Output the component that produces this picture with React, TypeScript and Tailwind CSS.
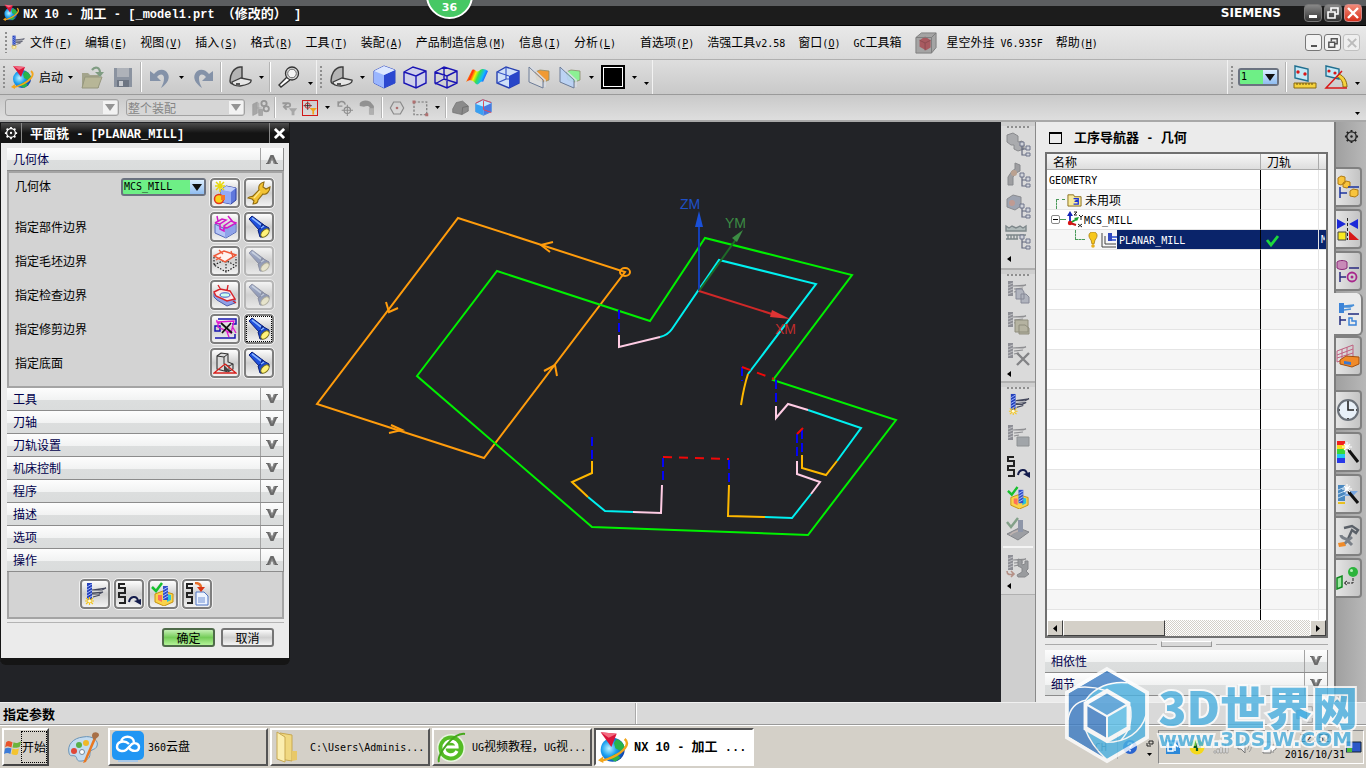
import React from "react";

type Kids = { children?: React.ReactNode };

/* Mixed text: half-width characters are set in a narrow monospace face beside the CJK glyphs. */
function Mix({ text, bold = false }: { text: string; bold?: boolean }) {
  const parts = text.split(/([\x20-\x7e]+)/).filter(Boolean);
  return (
    <span className={bold ? "whitespace-pre font-bold text-[13px]" : "whitespace-pre text-[12px]"}>
      {parts.map((p, i) =>
        /^[\x20-\x7e]+$/.test(p) ? (
          <span
            key={i}
            className={
              bold
                ? "font-['Liberation_Mono',monospace] text-[12px]"
                : "font-['DejaVu_Sans_Mono',monospace] text-[10px]"
            }
          >
            {p}
          </span>
        ) : (
          <span key={i}>{p}</span>
        )
      )}
    </span>
  );
}

function Svg({ s = 24, children, dim = false, vb = "0 0 24 24" }: Kids & { s?: number; dim?: boolean; vb?: string }) {
  return (
    <svg width={s} height={s} viewBox={vb} fill="none" aria-hidden="true" className={dim ? "shrink-0 opacity-50 grayscale" : "shrink-0"}>
      {children}
    </svg>
  );
}

/* ---------- icons ---------- */

const NxLogo = ({ s = 24 }: { s?: number }) => (
  <Svg s={s}>
    <defs>
      <radialGradient id="nxg" cx="0.35" cy="0.45" r="0.7">
        <stop offset="0" stopColor="#bff4ff" />
        <stop offset="0.45" stopColor="#1aa0f0" />
        <stop offset="1" stopColor="#0b2fa0" />
      </radialGradient>
    </defs>
    <circle cx="11" cy="14" r="9" fill="url(#nxg)" />
    <path d="M14 6c3 1 5 3 6 6l-3 3-4-2-1-4zM8 20l5-3 4 3-4 3z" fill="#29b34a" />
    <path d="M20 6c5 4-2 10-8 13-4 2-8 3-10 3" stroke="#f2a61c" strokeWidth="1.8" />
    <path d="M0 22l4-3v5z" fill="#f2a61c" />
    <path d="M2 1l12 1-4 10z" fill="#d8143a" />
    <path d="M2 1l12 1-6 3z" fill="#f46a80" />
  </Svg>
);

const Mill = ({ s = 24 }: { s?: number }) => (
  <Svg s={s}>
    <path d="M4 1h5v17H4z" fill="#2440b8" />
    <path d="M4 5l5-3M4 8l5-3M4 11l5-3M4 14l5-3M4 17l5-3" stroke="#9db4ff" />
    <path d="M9 8l14-2-4 2H9M9 11l11-1-4 2H9M10 15l7-2" stroke="#44485c" strokeWidth="1.1" />
    <path d="M6.5 15v8M2 19h9M3 16l7 6M10 16l-7 6" stroke="#f5c518" strokeWidth="1.1" />
    <circle cx="6.500" cy="19" r="1.500" fill="#fffbe0" />
  </Svg>
);

const Serp = ({ s = 24 }: { s?: number }) => (
  <Svg s={s}>
    <path d="M8 2H2v4h6v5H2v4h6v6H2" stroke="#222" strokeWidth="2" />
    <path d="M12 20c1-6 8-7 9-1" stroke="#141c4c" strokeWidth="2" />
    <path d="M17 19l7-2v6z" fill="#141c4c" />
  </Svg>
);

const Verify = ({ s = 24 }: { s?: number }) => (
  <Svg s={s}>
    <path d="M4 12l8-3 10 3v8l-9 4-9-4z" fill="#f9d34a" stroke="#c79412" />
    <path d="M7 13h4v7l-4-2z" fill="#ff6f5a" />
    <path d="M16 12l4 1v5l-4 2z" fill="#2cc7d8" />
    <path d="M12 4h5v14h-5z" fill="#3150c8" />
    <path d="M12 8l5-3M12 11l5-3M12 14l5-3M12 17l5-3" stroke="#a9bcff" />
    <path d="M1 5l4 4 6-8" stroke="#16c02e" strokeWidth="2.5" />
  </Svg>
);

const Post = () => (
  <Svg>
    <path d="M8 2H2v4h5v5H2v4h5v6H2" stroke="#222" strokeWidth="2" />
    <path d="M11 10h8l4 4v9H11z" fill="#eef4ff" stroke="#4f74c4" />
    <path d="M13 16h7M13 18h7M13 20h7" stroke="#6f8fd4" />
    <path d="M10 1c4 0 6 2 6 5" stroke="#e8702a" strokeWidth="2.5" />
    <path d="M12 5h8l-4 5z" fill="#d93616" />
  </Svg>
);

const Torch = ({ dim = false }: { dim?: boolean }) => (
  <svg width={24} height={24} viewBox="0 0 24 24" fill="none" aria-hidden="true" className={dim ? "opacity-40 saturate-50" : ""}>
    <path d="M2 4l3-3 12 9-5 5z" fill="#1f50dc" stroke="#0a1f78" />
    <path d="M5 3l9 7" stroke="#8cb8ff" strokeWidth="1.600" />
    <path d="M11 15c2-1 4-3 4-6l7 4v3l-6 6h-3z" fill="#1b48c8" stroke="#0a1f78" />
    <path d="M14 13l3-2" stroke="#8cb8ff" strokeWidth="1.500" />
    <ellipse cx="18" cy="18" rx="5" ry="3" transform="rotate(-45 18 18)" fill="#fff27a" stroke="#7a7018" />
  </svg>
);

const Cube = ({ s = 24 }: { s?: number }) => (
  <Svg s={s}>
    <path d="M2 6l10-5 11 4v13l-11 5-10-5z" fill="#9fb8ff" stroke="#2c46c0" />
    <path d="M12 10l11-5v13l-11 5z" fill="#2b47d0" />
    <path d="M2 6l10 4v13L2 18z" fill="#9ab6ff" />
    <path d="M2 6l10-5 11 4-11 5z" fill="#dce7ff" />
  </Svg>
);
const CubeEdges = () => (
  <Svg>
    <path d="M1 7l9-5 13 4v12l-10 5-12-5zM1 7l12 4v12M13 11l10-5" fill="#cfd0ea" stroke="#1a14b4" strokeWidth="1.4" />
  </Svg>
);
const CubeWire = () => (
  <Svg>
    <path d="M1 7l9-5 13 4v12l-10 5-12-5zM1 7l12 4v12M13 11l10-5M10 2v12M1 19l9-5 13 4" stroke="#1a14b4" strokeWidth="1.4" />
  </Svg>
);
const CubeHalf = () => (
  <Svg>
    <path d="M1 7l9-5 13 4v12l-10 5-12-5z" fill="#cfe0f8" stroke="#2840b0" strokeWidth="1.4" />
    <path d="M13 11l10-5v12l-10 5z" fill="#2846c8" />
    <path d="M1 7l12 4M10 2v12L1 18M10 14h3" stroke="#3a58c8" strokeWidth="1.2" />
  </Svg>
);
const Rainbow = () => (
  <Svg>
    <defs>
      <linearGradient id="rb" x1="0" x2="1" y1="0.1" y2="0.4">
        <stop offset="0" stopColor="#ff8a00" />
        <stop offset="0.12" stopColor="#ffe000" />
        <stop offset="0.3" stopColor="#ff2a10" />
        <stop offset="0.45" stopColor="#ffee00" />
        <stop offset="0.6" stopColor="#39e04a" />
        <stop offset="0.8" stopColor="#10b8ff" />
        <stop offset="1" stopColor="#2a30ff" />
      </linearGradient>
    </defs>
    <path d="M1 17L7 5c3-2 4 3 7 1 3-3 6-2 9 0l-5 11c-3-2-4 4-7 2-3-4-6-5-10-2z" fill="url(#rb)" />
  </Svg>
);
const Section = ({ a, b }: { a: string; b: string }) => (
  <Svg>
    <path d="M8 7l5-2 9 1v9l-5 2-7-2z" fill={a} stroke="#8a8a6a" strokeWidth="0.800" />
    <path d="M2 2l14 13v8L2 17z" fill={b} fillOpacity="0.9" stroke="#6c7c98" />
    <path d="M4 2l14 13v7" stroke="#d8dce4" strokeWidth="1.600" />
  </Svg>
);
const Sweep = () => (
  <Svg>
    <path d="M2 16c0-6 3-13 10-14h2v13l-8 4c-2 0-4-1-4-3z" fill="#b4b4b4" stroke="#3c3c3c" strokeWidth="1.4" />
    <path d="M4 17l9-4 10 2c1 3-4 5-11 6-5 0-8-1-8-4z" fill="#e6e6e6" stroke="#3c3c3c" strokeWidth="1.3" />
    <path d="M8 18h4v2H8z" fill="#555" />
  </Svg>
);
const Magnify = () => (
  <Svg>
    <path d="M10 12l-8 8 2 2 9-7" fill="#fff" stroke="#333" strokeWidth="1.4" />
    <circle cx="15" cy="8.5" r="6.500" fill="#ddd" stroke="#333" strokeWidth="1.3" />
    <circle cx="15" cy="8.5" r="4.300" fill="#f4f4f4" stroke="#666" />
  </Svg>
);
const Folder = () => (
  <Svg>
    <path d="M2 8h6l2 2h9v13H2z" fill="#a3a48c" />
    <path d="M5 12h17l-4 11H2z" fill="#b7b697" stroke="#96977e" />
    <path d="M12 5c3-4 8-3 8 3" stroke="#7f9c82" strokeWidth="2.2" />
    <path d="M15 7h9l-4 5z" fill="#7f9c82" />
  </Svg>
);
const Save = () => (
  <Svg>
    <path d="M3 3h18v19H3z" fill="#8b93a0" />
    <path d="M6 3h12v9H6z" fill="#aeb2b9" />
    <path d="M6 15h12v7H6z" fill="#6d7582" />
    <path d="M8 16h4v5H8z" fill="#c8cbd0" />
  </Svg>
);
const Undo = ({ flip = false }: { flip?: boolean }) => (
  <Svg>
    <g transform={flip ? "translate(24 0) scale(-1 1)" : undefined}>
      <path d="M2 6v10h11l-4-4c3-4 7-3 7 1 0 4-1 6-3 10 7-5 9-10 7-14-3-6-10-5-14 0z" fill="#8492a8" />
    </g>
  </Svg>
);
const Gear = ({ light = false, s = 16 }: { light?: boolean; s?: number }) => (
  <Svg s={s} vb="0 0 16 16">
    <path d="M8 1v14M1 8h14M3 3l10 10M13 3L3 13" stroke={light ? "#fff" : "#222"} strokeWidth="2" />
    <circle cx="8" cy="8" r="5" fill={light ? "#222" : "#aaa"} stroke={light ? "#fff" : "#222"} strokeWidth="1.4" />
    <circle cx="8" cy="8" r="1.3" fill={light ? "#fff" : "#222"} />
  </Svg>
);
const Wrench = () => (
  <Svg>
    <path d="M1 17c2-2 4-1 5-2l6-6c-1-4 1-7 5-8l-1 5 3 2 4-2c0 5-4 8-7 7l-5 6c0 3-2 4-5 4l1-3-2-2z" fill="#f2c233" stroke="#8f6b10" strokeWidth="1.1" />
    <path d="M7 17l6-7" stroke="#fde88a" strokeWidth="1.400" />
  </Svg>
);
const NewGeom = () => (
  <Svg>
    <path d="M8 9l5-4 10 2v12l-5 4-10-2z" fill="#5f78dc" stroke="#2d3fa0" />
    <path d="M8 9l10 2v12L8 21z" fill="#93aaf5" />
    <path d="M8 9l5-4 10 2-5 4z" fill="#c2d0fb" />
    <circle cx="6" cy="18" r="4.500" fill="#f7d21c" stroke="#e2361c" strokeWidth="1.500" />
    <path d="M8 14h4v5H8z" fill="#f2762a" />
    <path d="M7 0v11M2 5h10M3 1l8 8M11 1L3 9" stroke="#e8d80c" strokeWidth="1.500" />
  </Svg>
);
const PartBnd = () => (
  <Svg>
    <path d="M2 9l10 5 11-5v8l-10 6-11-5z" fill="#b4c4f6" stroke="#5468b8" />
    <path d="M12 14v9l10-6V9z" fill="#8ea2ea" />
    <path d="M2 8l7-4 4 1-6 4v5l4 2v-5l7-5 5 2-9 5-3-1M2 8l5 1M4 1l1 5M15 1l5 6" stroke="#d217c8" strokeWidth="1.500" />
  </Svg>
);
const BlankBnd = () => (
  <Svg>
    <path d="M1 8v8l12 7 10-6V8M13 12v11M1 16l11-5 11 6" stroke="#222" strokeWidth="1.2" strokeDasharray="1.5 1.5" />
    <path d="M1 7l10-5 12 4-11 7z" fill="#fff3ef" stroke="#ee5a3a" strokeWidth="1.5" />
    <path d="M6 1l4 4M18 2l2 6M3 11l5-3" stroke="#ee5a3a" strokeWidth="1.3" />
  </Svg>
);
const CheckBnd = () => (
  <Svg>
    <path d="M1 10l5-3 10 2 6 7v4l-8 3-10-6-3-3z" fill="#8fa0e8" stroke="#5060a8" />
    <path d="M1 9l6-3 10 2 5 8-8 2-11-5zM5 2l3 5M15 2l-1 6M20 18l3 2" fill="#fbe8e8" stroke="#d8232a" strokeWidth="1.400" />
    <ellipse cx="12" cy="12" rx="5" ry="2.200" fill="#cfe" stroke="#3b56c8" />
  </Svg>
);
const TrimBnd = () => (
  <Svg>
    <path d="M5 2h18v5h-4M2 9h5v5H2zM2 21h20v-4" stroke="#1714b0" strokeWidth="1.500" />
    <path d="M5 5l16-1-3 12-13-6zM4 3a2 2 0 104 2M14 15l2 5M19 9l4 7" stroke="#e014d0" strokeWidth="1.300" fill="none" />
    <path d="M8 6l11 10M18 6L9 16" stroke="#111" strokeWidth="1.700" />
  </Svg>
);
const Floor = () => (
  <Svg>
    <path d="M4 5l4-3 7 1v8l5 2v5l-5 3-11-3z" fill="#dadada" stroke="#333" strokeWidth="1.1" />
    <path d="M4 5l7 1v7l5 2v5M11 6l4-3M16 15l4-2" stroke="#333" />
    <path d="M1 22h22L12 13z" stroke="#d8201c" strokeWidth="1.3" />
    <path d="M11 14l6 6h-6z" fill="#444" />
  </Svg>
);
const TreeMini = ({ kind }: { kind: number }) => (
  <Svg s={26} vb="0 0 26 26">
    <g opacity="0.75">
      {kind === 0 && <path d="M2 4l6-2 5 3v6l4-1 2 3v5l-6 2-4-2v-4H6l-4-3z" fill="#9b9ca0" stroke="#6f7074" />}
      {kind === 1 && (
        <>
          <path d="M10 1l5 2v6l-4 2-3 4v8H3v-8l4-6 3-2z" fill="#8a8b8f" stroke="#6d6e72" />
          <circle cx="9" cy="11" r="3" fill="#b08f78" />
        </>
      )}
      {kind === 2 && (
        <>
          <path d="M2 6l6-4 8 2v9l-6 4-8-3z" fill="#8b93a4" stroke="#6f7176" />
          <circle cx="7" cy="10" r="3" fill="#b6867c" />
        </>
      )}
      {kind === 3 && (
        <path d="M1 2v5h20V2l-3 2-3-2-4 2-4-2-3 2zM1 11h20M1 15h12M3 11v4M6 11v4M9 11v4M12 11v4" fill="#a3b0b0" stroke="#5f6c70" strokeWidth="1.4" />
      )}
      <path d="M17 14v10h4M17 18h4" stroke="#3d4560" strokeWidth="1.2" />
      <path d="M15 11h4v4h-4zM21 15h4v4h-4zM21 22h4v3h-4z" fill="#cfd2dc" stroke="#4a5270" />
    </g>
  </Svg>
);
const DimOver = ({ kind }: { kind: number }) => (
  <Svg s={24}>
    <g opacity="0.75">
      <path d="M2 1h5v15H2z" fill="#74757e" />
      <path d="M2 5l5-2M2 8l5-2M2 11l5-2M2 14l5-2" stroke="#b4b5bb" />
      <path d="M7 6l13-1-3 1H7M8 9l9-1M8 12l5-1" stroke="#76777b" strokeWidth="1.2" />
      {kind === 0 && <path d="M10 9h6l2 3v7h-8zM15 14h5l3 3v6h-8z" fill="#a3a6b4" stroke="#6a6e80" />}
      {kind === 1 && <path d="M9 9h13v12H9zM13 14h6l4 3v6H13z" fill="#a9a68f" stroke="#77745e" />}
      {kind === 2 && <path d="M11 11l12 12M23 11L11 23" stroke="#66676a" strokeWidth="2.4" />}
      {kind === 3 && <path d="M11 13h12v9H11z" fill="#8f9499" stroke="#74787c" />}
      {kind === 4 && (
        <>
          <path d="M12 5l4 1v5l3-1v-3h3v8l-2 2 3 3-4 3h-7l-1-2 5-3v-4l-4-2z" fill="#84868a" stroke="#6a6c70" />
          <path d="M1 17c0 4 3 4 6 3M5 17l3 3-3 3" stroke="#a8786a" strokeWidth="1.6" />
        </>
      )}
    </g>
  </Svg>
);
const SimDim = () => (
  <Svg>
    <g opacity="0.7">
      <path d="M1 17l12-6 10 4-11 8z" fill="#82858c" stroke="#5f6268" />
      <path d="M4 18c5-5 8-3 12-6" stroke="#b4a4a0" strokeWidth="1.400" />
      <path d="M12 3h5v12h-5z" fill="#6f7a94" />
      <path d="M1 5l4 5 7-9" stroke="#5f8a68" strokeWidth="2.5" />
    </g>
  </Svg>
);

/* ---------- small parts ---------- */

const Arrow = ({ low = false }: { low?: boolean }) => (
  <svg width="5" height="3" viewBox="0 0 5 3" aria-hidden="true" className={low ? "mt-3" : ""}>
    <path d="M0 0h5L2.500 3z" fill="#000" />
  </svg>
);
const ArrowBtn = ({ label, low = false }: { label: string; low?: boolean }) => (
  <button aria-label={label} className="flex h-7 w-3 items-center justify-center">
    <Arrow low={low} />
  </button>
);
const Tool = ({ label, children }: Kids & { label: string }) => (
  <button aria-label={label} className="flex h-7 w-[31px] items-center justify-center">
    {children}
  </button>
);
const Sep = () => (
  <div className="flex w-1.5 justify-center self-stretch py-0.5">
    <div className="w-0.5 border-l border-[#b4b4b4] bg-white" />
  </div>
);
const Grip = () => (
  <div className="flex w-2 justify-center self-stretch py-1.5">
    <div className="w-0.5 bg-[repeating-linear-gradient(to_bottom,#8e8e8e_0_2px,transparent_2px_4px)]" />
  </div>
);
const HGrip = () => <div className="mx-auto mt-1 h-0.5 w-[22px] bg-[repeating-linear-gradient(to_right,#8e8e8e_0_2px,transparent_2px_4px)]" />;

const Chevron = ({ up = false }: { up?: boolean }) => (
  <svg width="12" height="10" viewBox="0 0 12 10" aria-hidden="true" className={up ? "rotate-180" : ""}>
    <path d="M0 0h4l2 5 2-5h4v1h-1L7.500 9h-3L1 1H0z" fill="#6a6a6a" />
    <path d="M3 0h1l2 5 2-5h1v1L6 7 3 1z" fill="#8a8a8a" />
  </svg>
);

function SectionBar({ title, open = false }: { title: string; open?: boolean }) {
  return (
    <button
      aria-expanded={open}
      className="flex h-[23px] w-full items-stretch border-r border-b border-[#8c8c8c] bg-[linear-gradient(#fdfdfd,#f1f2f2_55%,#dcdede_56%,#dadcdc)] text-left text-[12px] text-[#00004c]"
    >
      <span className="flex flex-1 items-center pl-1.5">{title}</span>
      <span className="flex w-[23px] items-center justify-center border-l border-[#a4a4a4]">
        <Chevron up={open} />
      </span>
    </button>
  );
}

const IconBtn = ({ label, children, off = false, focus = false }: Kids & { label: string; off?: boolean; focus?: boolean }) => (
  <button
    aria-label={label}
    disabled={off}
    className={
      off
        ? "flex size-[30px] items-center justify-center rounded-[4px] border-2 border-[#b6b6b6] bg-[linear-gradient(#f4f4f4,#d0d0d0_50%,#e8e8e8)] outline-1 outline-[#e8e8e8]"
        : "flex size-[30px] items-center justify-center rounded-[4px] border-2 border-[#7e7e7e] bg-[linear-gradient(#fdfdfd,#cfcfcf_50%,#f2f2f2)] outline-1 outline-[#f0f0f0]"
    }
  >
    <span className={focus ? "flex size-[26px] items-center justify-center border border-dotted border-black" : "flex"}>{children}</span>
  </button>
);

function Combo({ label, value, width, on = true }: { label: string; value: string; width: string; on?: boolean }) {
  return (
    <label className={"relative block shrink-0 " + width}>
      <span className="sr-only">{label}</span>
      <select
        disabled={!on}
        className={
          on
            ? "block h-[18px] w-full appearance-none rounded-[3px] border-2 border-[#6b7280] bg-[#6eef86] pl-px font-['DejaVu_Sans_Mono',monospace] text-[10px] leading-[14px] text-black"
            : "block h-[17px] w-full appearance-none rounded-[3px] border border-[#a2a2a2] bg-[#d6d6d6] pl-px text-[12px] leading-[15px] text-[#858585] opacity-100"
        }
      >
        <option>{value}</option>
      </select>
      <span
        className={
          on
            ? "pointer-events-none absolute top-0.5 right-0.5 flex h-[14px] w-3.5 items-center justify-center bg-[linear-gradient(#dceeff,#8fbcf0)]"
            : "pointer-events-none absolute top-0.5 right-0.5 flex h-[13px] w-3.5 items-center justify-center bg-[#f2f2f2]"
        }
      >
        <svg width="10" height="7" viewBox="0 0 10 7" aria-hidden="true">
          <path d="M0 0h10L5 7z" fill={on ? "#111" : "#949494"} />
        </svg>
      </span>
    </label>
  );
}

/* ---------- header rows ---------- */

const MENUS: [string, string][] = [
  ["文件", "F"], ["编辑", "E"], ["视图", "V"], ["插入", "S"], ["格式", "R"], ["工具", "T"],
  ["装配", "A"], ["产品制造信息", "M"], ["信息", "I"], ["分析", "L"],
];

const MenuItem = ({ t, k }: { t: string; k?: string }) => (
  <button className="flex items-baseline whitespace-pre text-[12px] text-black">
    <Mix text={t} />
    {k && (
      <span className="font-['DejaVu_Sans_Mono',monospace] text-[10px]">
        (<u>{k}</u>)
      </span>
    )}
  </button>
);

function TitleBar() {
  return (
    <header className="relative flex h-[26px] items-center border-b border-black bg-[linear-gradient(#5c5e60_0_6px,#1c1c1c_6px)] pl-[3px] text-white">
      <NxLogo s={17} />
      <h1 className="ml-[3px] flex-1">
        <Mix bold text="NX 10 - 加工 - [_model1.prt （修改的） ]" />
      </h1>
      <div className="absolute -top-[28px] left-[426px] z-10 flex size-[47px] items-end justify-center rounded-full border-2 border-white bg-[#46c864] pb-[3px] font-['DejaVu_Sans',sans-serif] text-[11px] leading-[13px] font-bold shadow">
        36
      </div>
      <span className="mr-[23px] font-['DejaVu_Sans',sans-serif] text-[12px] font-bold">SIEMENS</span>
      <div className="mr-1 flex gap-0.5">
        <button aria-label="最小化" className="flex size-[18px] items-end justify-center rounded-sm border border-[#777] bg-[linear-gradient(#888,#333)] pb-[3px]">
          <span className="h-[3px] w-2 bg-white" />
        </button>
        <button aria-label="还原" className="flex size-[18px] items-center justify-center rounded-sm border border-[#777] bg-[linear-gradient(#888,#333)]">
          <Svg s={12} vb="0 0 12 12"><path d="M4 4V1h7v6H8M1 5h7v6H1z" stroke="#fff" strokeWidth="1.600" /></Svg>
        </button>
        <button aria-label="关闭" className="flex size-[18px] items-center justify-center rounded-sm border border-[#c88] bg-[linear-gradient(#f08a78,#d8301c)]">
          <Svg s={12} vb="0 0 12 12"><path d="M1 1l10 10M11 1L1 11" stroke="#fff" strokeWidth="2.400" /></Svg>
        </button>
      </div>
    </header>
  );
}

function MenuBar() {
  return (
    <nav aria-label="主菜单" className="flex h-[34px] items-center border-b border-[#b0b0b0] bg-[linear-gradient(#e9e9e9,#d9d9d9)] pl-0.5">
      <div className="flex w-7 items-center self-stretch">
        <Grip />
        <Mill s={15} />
      </div>
      <div className="flex items-center gap-[13px]">
        {MENUS.map(([t, k]) => <MenuItem key={t} t={t} k={k} />)}
        <span className="-ml-0.5" />
        <MenuItem t="首选项" k="P" />
        <MenuItem t="浩强工具v2.58" />
        <MenuItem t="窗口" k="O" />
        <MenuItem t="GC工具箱" />
        <span className="-mr-[3px] flex">
          <Svg s={22}>
            <path d="M1 6l6-5h16v16l-5 6H1z" fill="#a4a4a4" stroke="#7c7c7c" />
            <path d="M5 9l6-4 6 4v8l-5 3-7-4z" fill="#a85a60" />
            <path d="M5 9l6 3 6-3M11 12v8" stroke="#8a4a50" />
            <path d="M1 6h17v17M18 6l5-5" stroke="#7c7c7c" />
          </Svg>
        </span>
        <MenuItem t="星空外挂 V6.935F" />
        <MenuItem t="帮助" k="H" />
      </div>
      <div className="mr-1.5 ml-auto flex gap-0.5">
        <button aria-label="最小化窗口" className="flex size-[17px] items-end justify-center rounded-[3px] border border-[#777] bg-[#f2f2f2] pb-[3px]">
          <span className="h-0.5 w-1.5 bg-[#555]" />
        </button>
        <button aria-label="还原窗口" className="flex size-[17px] items-center justify-center rounded-[3px] border border-[#777] bg-[#f2f2f2]">
          <Svg s={10} vb="0 0 12 12"><path d="M4 4V1h7v6H8M1 5h7v6H1z" stroke="#555" strokeWidth="1.800" /></Svg>
        </button>
        <button aria-label="关闭窗口" className="flex size-[17px] items-center justify-center rounded-[3px] border border-[#c0c0c0] bg-[#eee]">
          <Svg s={10} vb="0 0 12 12"><path d="M1 1l10 10M11 1L1 11" stroke="#bbb" strokeWidth="2.400" /></Svg>
        </button>
      </div>
    </nav>
  );
}

const MeasureDist = () => (
  <Svg>
    <path d="M2 1l13 3v12L2 13z" fill="#c4e8f6" stroke="#1f6f90" strokeWidth="1.4" />
    <circle cx="5" cy="7" r="1.700" fill="#d81818" /><circle cx="12" cy="9" r="1.700" fill="#d81818" />
    <path d="M1 18h22v5H1z" fill="#f5d23c" stroke="#8a6a10" />
    <path d="M4 18v2M7 18v2M10 18v2M13 18v2M16 18v2M19 18v2" stroke="#6a5010" />
  </Svg>
);
const MeasureAng = () => (
  <Svg>
    <path d="M2 1l13 3v10L2 11z" fill="#c4e8f6" stroke="#1f6f90" strokeWidth="1.4" />
    <circle cx="5" cy="6" r="1.600" fill="#d81818" /><circle cx="11" cy="8" r="1.600" fill="#d81818" />
    <path d="M15 9c5 2 8 7 8 13h-4c0-5-2-9-6-10z" fill="#f5d23c" stroke="#8a6a10" />
    <path d="M18 6L2 23h21" stroke="#d81818" strokeWidth="1.500" />
  </Svg>
);

function MainToolbar() {
  return (
    <div className="flex h-[35px] border-b border-[#9a9a9a] bg-[linear-gradient(#dedede,#c9c9c9)]">
      <div className="flex items-center border-r border-[#f2f2f2]">
        <Grip />
        <button className="flex items-center whitespace-pre text-[12px] text-black">
          <span className="flex w-[30px] justify-center"><NxLogo s={24} /></span>
          <span className="w-[26px]">启动</span>
        </button>
        <ArrowBtn label="启动选项" />
        <Tool label="打开"><Folder /></Tool>
        <Tool label="保存"><Save /></Tool>
        <Sep />
        <Tool label="撤消"><Undo /></Tool>
        <ArrowBtn label="撤消列表" />
        <Tool label="重做"><Undo flip /></Tool>
        <Sep />
        <Tool label="编辑显示"><Sweep /></Tool>
        <ArrowBtn label="显示选项" />
        <Sep />
        <Tool label="命令查找"><Magnify /></Tool>
        <ArrowBtn label="更多" low />
      </div>
      <div className="flex items-center border-r border-[#f2f2f2]">
        <Grip />
        <Tool label="视图方位"><Sweep /></Tool>
        <ArrowBtn label="方位选项" />
        <Tool label="着色"><Cube /></Tool>
        <Tool label="带边着色"><CubeEdges /></Tool>
        <Tool label="静态线框"><CubeWire /></Tool>
        <Tool label="面分析"><Rainbow /></Tool>
        <Tool label="局部着色"><CubeHalf /></Tool>
        <Tool label="编辑截面"><Section a="#f09a34" b="#dedede" /></Tool>
        <Tool label="剪切截面"><Section a="#8cf094" b="#b9d3f6" /></Tool>
        <ArrowBtn label="截面选项" />
        <Tool label="背景"><span className="size-6 border-2 border-black bg-black shadow-[inset_0_0_0_1px_#fff]" /></Tool>
        <ArrowBtn label="背景选项" />
        <ArrowBtn label="更多视图" low />
      </div>
      <div className="ml-auto flex items-center border-l border-[#f2f2f2] pr-[3px]">
        <Grip />
        <span className="w-0.5" />
        <Combo label="工作层" value="1" width="w-[41px]" />
        <span className="w-1" />
        <Sep />
        <Tool label="测量距离"><MeasureDist /></Tool>
        <Tool label="测量角度"><MeasureAng /></Tool>
        <ArrowBtn label="更多测量" low />
      </div>
    </div>
  );
}

const SmallTool = ({ label, children }: Kids & { label: string }) => (
  <button aria-label={label} className="flex h-5 w-[23px] items-center justify-center">
    {children}
  </button>
);

function SelectionBar() {
  return (
    <div className="flex h-[27px] items-center border-b-2 border-[#a8a8a8] bg-[linear-gradient(#c9c9c9,#dedede)] pl-[5px]">
      <Combo label="类型过滤器" value="" width="w-[114px]" on={false} />
      <span className="w-[7px]" />
      <Combo label="选择范围" value="整个装配" width="w-[119px]" on={false} />
      <span className="w-1" />
      <SmallTool label="相邻"><Svg s={18} dim><path d="M1 7l6-3v15l-6 3zM9 5v14M6 12h7M9 14h5v8H9z" fill="#777" stroke="#667" /><circle cx="16" cy="6" r="3.500" stroke="#665c30" strokeWidth="2.500" /><circle cx="19" cy="13" r="3.500" stroke="#665c30" strokeWidth="2.500" /></Svg></SmallTool>
      <Sep />
      <SmallTool label="重置过滤器"><Svg s={17} dim><path d="M2 6h8c4 0 4 5 0 5H6M8 7l-4 4 4 4" stroke="#566" strokeWidth="2.500" /><path d="M11 13h12l-4 5v5h-4v-5z" fill="#887a4a" /></Svg></SmallTool>
      <button aria-label="允许高亮显示" className="mr-[3px] ml-px flex size-4 items-center justify-center border border-[#d01818]">
        <Svg s={14}><path d="M8 1v14M1 8h14" stroke="#222" strokeWidth="1.500" /><circle cx="8" cy="8" r="4.500" stroke="#c22" strokeWidth="1.500" /><path d="M11 12h13l-5 5v6h-3v-6z" fill="#f2a41c" /></Svg>
      </button>
      <ArrowBtn label="高亮选项" />
      <SmallTool label="移动"><Svg s={17} dim><path d="M3 9C4 2 12 2 13 8M3 3v7h6" stroke="#555" strokeWidth="2" /><circle cx="16" cy="16" r="4.500" stroke="#834" strokeWidth="1.600" /><path d="M16 8v16M8 16h16" stroke="#834" strokeWidth="1.500" /></Svg></SmallTool>
      <SmallTool label="拖动"><Svg s={17} dim><path d="M1 6c3-4 9-5 15-2l5 6v12h-6V12c-2-3-5-2-8-1L1 10z" fill="#554" /><path d="M14 13h7v9h-7z" fill="#998a60" /></Svg></SmallTool>
      <Sep />
      <SmallTool label="点"><Svg s={16}><path d="M7 3h10l5 9-5 9H7l-5-9z" stroke="#8a8a8a" strokeWidth="1.800" /><circle cx="12" cy="12" r="2" fill="#b07070" /></Svg></SmallTool>
      <SmallTool label="矩形选择"><Svg s={18}><path d="M4 4h17v17H4z" stroke="#777" strokeWidth="1.600" strokeDasharray="3 2" /><path d="M2 2h4v4H2zM19 19h4v4h-4z" fill="#b07070" /></Svg></SmallTool>
      <ArrowBtn label="选择方式" />
      <Sep />
      <SmallTool label="实体"><Svg s={17}><path d="M1 14l5-9 9-2 8 7v7l-9 5-13-3z" fill="#8a8a8a" stroke="#707070" /><path d="M14 22l1-10 8-2" stroke="#666" /></Svg></SmallTool>
      <SmallTool label="着色边"><Svg s={17}><path d="M1 6l10-5 12 4v13l-11 5-11-5z" fill="#bfe9ff" stroke="#2b7fd8" /><path d="M1 7l11 4v12L1 18z" fill="#38a0f2" /><path d="M12 11l11-5v12l-11 5z" fill="#4a78e0" /><path d="M1 6l10-5 12 4M12 3v12l11 4" stroke="#e04858" strokeWidth="1.400" /></Svg></SmallTool>
      <div className="ml-auto flex pr-[3px]"><ArrowBtn label="选择条选项" low /></div>
    </div>
  );
}

/* ---------- graphics area ---------- */

function Toolpath() {
  return (
    <svg viewBox="0 122 1001 580" preserveAspectRatio="xMinYMin meet" className="absolute inset-0 size-full" fill="none" aria-label="刀轨">
      <g strokeWidth="2">
        <path d="M458 218L625 272 484 458 317 404z" stroke="#ff9c0c" />
        <path d="M553 242l-12 3 9 7M386 302l3 10 9-4M391 425l11 5-13 3M544 371l11-6 2 11" stroke="#ff9c0c" />
        <ellipse cx="625" cy="272" rx="5" ry="4" stroke="#ff9c0c" />
        <path d="M497 271L650 321 705 238 852 275 773 380 896 420 808 535 592 527 417 376z" stroke="#00f000" />
        <g stroke="#00f0f0">
          <path d="M660 337q8-2 12-8L719 260 816 284 748 374M808 410l53 18-24 33M811 494l-19 24-27-1M633 512l-28-1-17-14" />
        </g>
        <g stroke="#ffcce4">
          <path d="M619 335v12l41-10M776 406v12l12-14 20 6M797 461v13l23 8-9 12M662 485l-1 28-28-1" />
        </g>
        <g stroke="#ffb800">
          <path d="M748 374q-4 12-7 31M837 461l-11 14-24-7v-13M765 517l-37-1 1-31M588 497l-16-15 20-9v-12" />
        </g>
        <g stroke="#0404f4" strokeDasharray="9 4">
          <path d="M619 310v25M742 367v14M776 380v24M802 430v26M797 434v26M729 460v24M663 458v26M592 437v24" />
        </g>
        <path d="M742 367l32 12M663 457l66 2M797 434l6-6" stroke="#f00808" strokeDasharray="9 7" />
        <path d="M699 291v-70" stroke="#1440b8" />
        <path d="M699 211l-4 16h8z" fill="#1a50d8" />
        <path d="M699 291l38-53" stroke="#1e6a28" />
        <path d="M743 230l-11 8 5 4z" fill="#3c8c44" />
        <path d="M699 291l76 24" stroke="#d02828" />
        <path d="M790 319l-18-9-2 7z" fill="#e03434" />
      </g>
      <g fontFamily="'Liberation Sans', sans-serif" fontSize="14">
        <text x="680" y="209" fill="#1e50c8">ZM</text>
        <text x="725" y="228" fill="#3c8c44">YM</text>
        <text x="775" y="334" fill="#c02c2c">XM</text>
      </g>
    </svg>
  );
}

const GEOM_ROWS: { name: string; icon: React.ReactNode; off?: boolean; focus?: boolean }[] = [
  { name: "指定部件边界", icon: <PartBnd /> },
  { name: "指定毛坯边界", icon: <BlankBnd />, off: true },
  { name: "指定检查边界", icon: <CheckBnd />, off: true },
  { name: "指定修剪边界", icon: <TrimBnd />, focus: true },
  { name: "指定底面", icon: <Floor /> },
];

function MillDialog() {
  return (
    <section role="dialog" aria-label="平面铣" className="relative mt-px w-[290px] rounded-b-md border-r border-b-[7px] border-l border-[#151515] bg-[#ebebeb]">
      <div className="flex h-5 items-center bg-[linear-gradient(#4c4c4c,#141414_50%)] text-white">
        <button aria-label="对话框选项" className="flex w-5 justify-center"><Gear light s={14} /></button>
        <h2 className="flex-1 border-l border-[#888] pl-2"><Mix bold text="平面铣 - [PLANAR_MILL]" /></h2>
        <button aria-label="关闭对话框" className="flex h-full w-5 items-center justify-center border-l border-[#888]">
          <Svg s={11} vb="0 0 12 12"><path d="M1 1l10 10M11 1L1 11" stroke="#fff" strokeWidth="3" /></Svg>
        </button>
      </div>
      <div className="pt-[5px] pr-[5px] pl-1.5">
        <SectionBar title="几何体" open />
        <div className="flex flex-col gap-1 border-2 border-[#a4a4a4] bg-[#d3d3d3] pt-[5px] pr-2 pb-2 pl-1.5 text-[12px]">
          <div className="flex items-start gap-1">
            <span className="flex-1">几何体</span>
            <Combo label="几何体" value="MCS_MILL" width="w-[85px]" />
            <IconBtn label="新建几何体"><NewGeom /></IconBtn>
            <IconBtn label="编辑几何体"><Wrench /></IconBtn>
          </div>
          {GEOM_ROWS.map((r) => (
            <div key={r.name} className="flex items-center gap-1">
              <span className="flex-1">{r.name}</span>
              <IconBtn label={r.name}>{r.icon}</IconBtn>
              <IconBtn label={r.name + " 显示"} off={r.off} focus={r.focus}><Torch dim={r.off} /></IconBtn>
            </div>
          ))}
        </div>
        {["工具", "刀轴", "刀轨设置", "机床控制", "程序", "描述", "选项"].map((t) => <SectionBar key={t} title={t} />)}
        <SectionBar title="操作" open />
        <div className="flex justify-center gap-1 border-2 border-t-0 border-[#a4a4a4] bg-[#d3d3d3] pt-[7px] pb-2">
          <IconBtn label="生成"><Mill /></IconBtn>
          <IconBtn label="重播"><Serp /></IconBtn>
          <IconBtn label="确认"><Verify /></IconBtn>
          <IconBtn label="列表"><Post /></IconBtn>
        </div>
        <div className="mt-[3px] border-t border-[#b4b4b4]" />
        <div className="flex justify-end gap-1.5 pt-[5px] pr-2.5 pb-[11px] text-[12px] leading-[15px]">
          <button className="h-[19px] w-[53px] rounded-[3px] border-2 border-[#4f6b4a] bg-[linear-gradient(#c4f0b4,#74cc58_50%,#b4f498)]">确定</button>
          <button className="h-[19px] w-[53px] rounded-[3px] border-2 border-[#757575] bg-[linear-gradient(#fafafa,#d0d0d0_50%,#f4f4f4)]">取消</button>
        </div>
      </div>
    </section>
  );
}

/* ---------- right side ---------- */

const VTool = ({ label, children }: Kids & { label: string }) => (
  <button aria-label={label} className="flex h-[31px] w-full items-center justify-center">{children}</button>
);
const LeftArrow = () => (
  <button aria-label="更多" className="flex h-2.5 w-full items-center pl-1.5">
    <svg width="4" height="6" viewBox="0 0 4 6" aria-hidden="true"><path d="M4 0v6L0 3z" fill="#000" /></svg>
  </button>
);

function SideTools() {
  return (
    <div className="w-[34px] shrink-0 bg-[#cfcfcf]">
      <div className="border-b-2 border-[#b0b0b0] bg-[#dadada] pb-1">
        <HGrip />
        {["程序视图", "机床视图", "几何视图", "加工方法视图"].map((t, i) => <VTool key={t} label={t}><TreeMini kind={i} /></VTool>)}
        <div className="pt-0.5"><LeftArrow /></div>
      </div>
      <div className="border-b-2 border-[#b0b0b0] bg-[#dadada] pb-0.5">
        <HGrip />
        {["复制", "粘贴", "删除"].map((t, i) => <VTool key={t} label={t}><DimOver kind={i} /></VTool>)}
        <LeftArrow />
      </div>
      <div className="border-b border-[#b0b0b0] bg-[#dadada] pb-[3px]">
        <HGrip />
        <VTool label="生成刀轨"><Mill s={23} /></VTool>
        <VTool label="并行生成"><DimOver kind={3} /></VTool>
        <VTool label="重播刀轨"><Serp s={24} /></VTool>
        <VTool label="确认刀轨"><Verify s={23} /></VTool>
        <VTool label="机床仿真"><SimDim /></VTool>
        <div className="mx-0.5 my-0.5 border-t-2 border-[#f4f4f4]" />
        <VTool label="后处理"><DimOver kind={4} /></VTool>
        <LeftArrow />
      </div>
    </div>
  );
}

const TreeRow = ({ children, sel = false, cells }: Kids & { sel?: boolean; cells?: React.ReactNode }) => (
  <tr className="h-5 odd:bg-white even:bg-[#f6f6f6]">
    <td className="border-r border-b border-r-black border-b-[#e4e4e4] p-0">
      <div className="flex h-[19px] items-center overflow-hidden">{children}</div>
    </td>
    <td className={sel ? "border-r border-b border-[#e4e4e4] bg-[#0a246a] p-0 pl-1" : "border-r border-b border-[#e4e4e4] p-0"}>{cells}</td>
    <td className={sel ? "border-b border-[#e4e4e4] bg-[#0a246a] p-0 text-[10px] text-white" : "border-b border-[#e4e4e4] p-0"}>
      {sel && <span className="block w-1.5 overflow-hidden pl-0.5 font-['DejaVu_Sans_Mono',monospace]">M</span>}
    </td>
  </tr>
);

function Navigator() {
  return (
    <aside className="flex w-[299px] shrink-0 flex-col border-l border-[#8a8a8a] bg-[#ebebeb] pr-1.5 pl-[9px]">
      <div className="flex h-[30px] items-center gap-3">
        <span className="mt-0.5 ml-1 h-3 w-[13px] border border-t-2 border-black" />
        <h2 className="text-black"><Mix bold text="工序导航器 - 几何" /></h2>
      </div>
      <div className="flex flex-col border-2 border-[#707070] bg-white">
        <table className="w-full table-fixed border-separate border-spacing-0 text-[12px]">
          <colgroup>
            <col className="w-[214px]" />
            <col className="w-[58px]" />
            <col />
          </colgroup>
          <thead>
            <tr className="h-4 bg-[linear-gradient(#f6f6f6,#dcdcdc)] text-left leading-[15px]">
              <th className="border-r border-b border-[#aaa] p-0 pl-1.5 font-normal">名称</th>
              <th className="border-r border-b border-[#aaa] p-0 pl-1.5 font-normal">刀轨</th>
              <th className="border-b border-[#aaa] p-0 font-normal" aria-label="刀具" />
            </tr>
          </thead>
          <tbody>
            <TreeRow><span className="pl-0.5"><Mix text="GEOMETRY" /></span></TreeRow>
            <TreeRow>
              <span className="ml-[9px] h-2.5 w-[9px] self-end border-t border-l border-dashed border-[#4a9a5a]" />
              <span className="ml-0.5"><Svg s={15} vb="0 0 16 16"><path d="M1 3h6l1 2h7v10H1z" fill="#f8ea9c" stroke="#8a6d1c" /><path d="M7 7h5v2H9h3v4H7M8 10h4" stroke="#1c34d8" strokeWidth="1.400" /></Svg></span>
              <span className="ml-[3px]">未用项</span>
            </TreeRow>
            <TreeRow>
              <button aria-label="折叠" className="ml-1 flex size-[9px] items-center justify-center rounded-[2px] border border-[#888] bg-white"><span className="h-px w-[5px] bg-black" /></button>
              <span className="w-1.5 border-t border-dashed border-[#4a9a5a]" />
              <Svg s={17} vb="0 0 17 17">
                <path d="M4 12V3" stroke="#1424b8" strokeWidth="1.800" /><path d="M1 5l3-5 3 5z" fill="#1424b8" />
                <path d="M4 12l7-4" stroke="#18a030" strokeWidth="1.800" /><path d="M13 6l-5 1 3 3z" fill="#18a030" />
                <path d="M4 12l6 2" stroke="#c81414" strokeWidth="2" /><circle cx="4" cy="12" r="2.200" fill="#d81414" />
                <path d="M8 1h3L8 4h3M13 4l2 2 2-2M15 6v3M12 13l4 3M16 13l-4 3" stroke="#222" />
              </Svg>
              <span className="pl-px"><Mix text="MCS_MILL" /></span>
            </TreeRow>
            <TreeRow sel cells={<Svg s={14} vb="-1 0 14 14"><path d="M1 7l4 5 7-9" stroke="#1cd83c" strokeWidth="2.800" /></Svg>}>
              <span className="ml-7 h-2.5 w-2.5 self-start border-b border-l border-dashed border-[#4a9a5a]" />
              <Svg s={16} vb="0 0 16 16"><path d="M8 0c5 0 5 5 2 8l-1 4H7L6 8C3 5 3 0 8 0z" fill="#f7c81c" stroke="#a87c10" strokeWidth="0.800" /><circle cx="8" cy="14" r="1.800" fill="#e8b020" /></Svg>
              <Svg s={16} vb="0 0 16 16"><path d="M1 1v14h14M4 4v8h11" stroke="#444" /><path d="M7 1h4v8H7z" fill="#3048c0" /><path d="M11 5h5M11 8h4" stroke="#2448d0" strokeWidth="1.500" /></Svg>
              <span className="flex h-5 flex-1 items-center bg-[#0a246a] pl-0.5 text-white"><Mix text="PLANAR_MILL" /></span>
            </TreeRow>
            {Array.from({ length: 18 }, (_, i) => <TreeRow key={i} />)}
            <tr className="h-[10px]"><td className="border-r border-black p-0" /><td className="border-r border-[#e4e4e4] p-0" /><td className="p-0" /></tr>
          </tbody>
        </table>
        <div className="flex h-4 bg-[repeating-conic-gradient(#d4d0c8_0_25%,#fff_0_50%)] bg-[length:2px_2px]">
          <button aria-label="向左滚动" className="flex w-4 items-center justify-center border border-t-white border-r-[#404040] border-b-[#404040] border-l-white bg-[#d4d0c8]">
            <svg width="4" height="7" viewBox="0 0 4 7"><path d="M4 0v7L0 3.500z" fill="#000" /></svg>
          </button>
          <div className="w-[102px] border border-t-white border-r-[#404040] border-b-[#404040] border-l-white bg-[#d4d0c8]" />
          <button aria-label="向右滚动" className="ml-auto flex w-4 items-center justify-center border border-t-white border-r-[#404040] border-b-[#404040] border-l-white bg-[#d4d0c8]">
            <svg width="4" height="7" viewBox="0 0 4 7"><path d="M0 0v7l4-3.500z" fill="#000" /></svg>
          </button>
        </div>
      </div>
      <div className="flex h-3 items-center gap-1">
        <span className="flex-1 border-t border-[#aaa]" />
        <span className="h-1.5 w-[51px] border border-[#999] border-t-white bg-[#d8d8d8]" />
        <span className="flex-1 border-t border-[#aaa]" />
      </div>
      <SectionBar title="相依性" />
      <SectionBar title="细节" />
    </aside>
  );
}

const Tab = ({ label, children, active = false }: Kids & { label: string; active?: boolean }) => (
  <button
    role="tab"
    aria-label={label}
    aria-selected={active}
    className={
      active
        ? "-ml-0.5 flex h-[43px] w-[29px] items-center justify-center rounded-r-md border-r-2 border-b-2 border-[#808080] bg-[#ebebeb]"
        : "mb-0.5 flex h-10 w-[26px] items-center justify-center rounded-r-[4px] border-2 border-l-0 border-[#808080] bg-[linear-gradient(to_right,#e4e4e4,#c4c4c4)]"
    }
  >
    {children}
  </button>
);

function ResourceBar() {
  return (
    <div className="flex w-8 shrink-0 flex-col border-l-2 border-[#7c7c7c] bg-[linear-gradient(to_right,#a0a0a0,#b8b8b8)]" role="tablist">
      <button aria-label="资源条选项" className="mt-1.5 mb-[22px] flex h-[17px] items-center justify-center"><Gear s={15} /></button>
      <Tab label="装配导航器"><Svg><path d="M2 3l3-2 4 1v6l-4 2-3-1zM7 8l3-2 4 1v4l-3 2-4-1zM14 16l3-2 5 1v5l-3 2-5-1z" fill="#f8c43c" stroke="#b07a10" /><path d="M12 12h11M4 12v11M4 18h7" stroke="#1c34a0" strokeWidth="1.500" /></Svg></Tab>
      <Tab label="约束导航器"><Svg><path d="M1 2l9 5-9 5zM22 2l-9 5 9 5z" fill="#1c28d8" /><path d="M2 15h8v8H2z" fill="#f8e820" stroke="#444" /><path d="M13 14l10 9H13z" fill="#d81818" /><path d="M11.500 1v22" stroke="#222" strokeDasharray="3 2" /></Svg></Tab>
      <Tab label="部件导航器"><Svg><path d="M1 3v6c2 2 8 2 10 0V3c-2-2-8-2-10 0z" fill="#c88ab8" stroke="#8a2a78" /><path d="M13 9h10M4 13v10M4 18h6" stroke="#2a2a80" strokeWidth="1.500" /><circle cx="16" cy="18" r="4.500" stroke="#a8288c" strokeWidth="1.800" /><circle cx="16" cy="18" r="1.500" fill="#a8288c" /></Svg></Tab>
      <Tab label="工序导航器" active><Svg><path d="M3 1h5v10H3z" fill="#3c84d8" /><path d="M8 4l10-1-4 2H8M8 8l7-1" stroke="#4a90d8" strokeWidth="1.400" /><path d="M12 12h11M4 14v9M4 18h6" stroke="#222c80" strokeWidth="1.500" /><path d="M13 16h3v3h4v4h-7z" stroke="#3c84d8" strokeWidth="1.500" /></Svg></Tab>
      <Tab label="机床导航器"><Svg><path d="M1 7L17 1v12L1 18zM1 11l16-6M1 14l16-5M6 5v12M11 3v12" stroke="#c06080" /><path d="M4 16l6-4 13 1v7l-7 3-12-3z" fill="#f08a28" stroke="#a05010" /><path d="M8 17l7 1v3l-7-1z" fill="#3c78d0" /></Svg></Tab>
      <span className="h-3" />
      <Tab label="历史记录"><Svg><circle cx="12" cy="12" r="10" fill="#e8f0f8" stroke="#6a7078" strokeWidth="2" /><path d="M12 4v8h6M12 3v1M12 20v1M3 12h1M20 12h1" stroke="#222" strokeWidth="1.600" /></Svg></Tab>
      <Tab label="可视化"><Svg><path d="M1 1h8v4H1z" fill="#f02020" /><path d="M1 5h8v4H1z" fill="#f8d820" /><path d="M1 9h8v5H1z" fill="#38d838" /><path d="M1 14h8v4H1z" fill="#20c8f0" /><path d="M1 18h8v5H1z" fill="#2838e8" /><path d="M11 8l11 14" stroke="#111" strokeWidth="3" /><path d="M11 2v10M6 7h10M8 4l6 6M14 4l-6 6" stroke="#fff" strokeWidth="1.200" /></Svg></Tab>
      <Tab label="加工向导"><Svg><path d="M2 3h7v16H2z" fill="#4a88c0" /><path d="M2 8l7-3M2 12l7-3M2 16l7-3" stroke="#bcd8f0" /><path d="M9 9h13l-5 5H9" fill="#7aa8e0" /><path d="M2 21h7" stroke="#e8c020" strokeWidth="2" /><path d="M11 8l11 13" stroke="#111" strokeWidth="3" /><path d="M11 2v10M6 7h10M8 4l6 6M14 4l-6 6" stroke="#fff" strokeWidth="1.200" /></Svg></Tab>
      <Tab label="角色"><Svg><path d="M8 4l8-2 6 4-2 3-4-3-4 9" stroke="#5a6068" strokeWidth="2.400" /><path d="M5 11c0 3 3 3 5 4l6 6M16 13l-9 8" stroke="#7a8088" strokeWidth="3" /><path d="M2 19l6-1 2 4-7 1z" fill="#f08a28" /></Svg></Tab>
      <Tab label="系统"><Svg><circle cx="17" cy="6" r="5" fill="#2cb43c" /><circle cx="15.500" cy="4.500" r="1.500" fill="#b8f0b8" /><path d="M1 12l5-2v11l-5 2z" fill="#9ce8a0" stroke="#108820" strokeWidth="1.500" /><path d="M17 12v5H9M11 15l-3 2 3 2" stroke="#222" strokeDasharray="3 1" /></Svg></Tab>
    </div>
  );
}

/* ---------- bottom ---------- */

function StatusBar() {
  return (
    <footer className="flex h-[23px] items-center border-t border-[#f0f0f0] bg-[#d9d9d9] pl-[3px] text-[13px] font-bold text-black">
      <p className="w-[633px]">指定参数</p>
      <span className="h-full border-l border-white shadow-[-1px_0_0_#aaa]" />
      <span className="mr-[53px] ml-auto"><Svg s={17}><path d="M1 6h14v12H1z" fill="#5ab0e8" stroke="#777" /><path d="M16 1h7v6M16 23h7v-6" stroke="#888" /></Svg></span>
    </footer>
  );
}

const TaskBtn = ({ icon, active = false, children }: Kids & { icon: React.ReactNode; active?: boolean }) => (
  <button
    className={
      active
        ? "flex h-[38px] w-40 items-center gap-1 border-2 border-t-[#555] border-r-white border-b-white border-l-[#555] bg-white pl-0.5 text-black"
        : "flex h-[38px] w-40 items-center gap-1 border-2 border-t-white border-r-[#555] border-b-[#555] border-l-white bg-[#d4d0c8] pl-0.5 text-black"
    }
  >
    {icon}
    {children}
  </button>
);

function TaskBar() {
  return (
    <div className="flex h-[43px] items-center gap-0.5 border-t border-white bg-[#d4d0c8] pl-0.5 text-[12px] shadow-[0_-1px_0_#999]">
      <button className="flex h-[38px] w-[47px] items-center border-2 border-t-white border-r-[#444] border-b-[#444] border-l-white text-black">
        <Svg s={17} vb="0 0 16 16"><path d="M2 3c2-2 4-1 6 0L7 8C5 7 3 6 1 8z" fill="#e8542c" /><path d="M9 3c2 1 4 1 7-1l-1 5c-3 2-5 1-7 1z" fill="#6cb43c" /><path d="M1 9c2-1 4-1 6 0l-1 5c-2-1-4-1-6 0z" fill="#3c7cd8" /><path d="M8 9c2 1 4 1 6 0l-1 5c-2 2-4 1-6 0z" fill="#f4c430" /></Svg>
        <span className="flex h-8 w-[26px] items-center whitespace-nowrap border border-dotted border-black">开始</span>
      </button>
      <button aria-label="画图" className="mr-[5px] ml-3.5 flex w-9 justify-center">
        <Svg s={33} vb="0 0 33 33">
          <path d="M2 22c-2-8 4-15 14-16 10-2 16 4 14 9-1 4-7 3-7 7s-1 7-8 8-4-4-7-5-5 1-6-3z" fill="#c4dcf0" stroke="#6a94b8" />
          <circle cx="7" cy="20" r="3" fill="#e04838" /><circle cx="12" cy="14" r="3" fill="#58b048" /><circle cx="19" cy="12" r="3" fill="#f0b828" /><circle cx="15" cy="21" r="2.500" fill="#fff" stroke="#789" />
          <path d="M27 6L16 32l3-1L29 8z" fill="#e87824" /><path d="M25 4c1-4 7-3 7 0 0 2-3 3-4 5-2-1-3-2-3-5z" fill="#a87048" />
        </Svg>
      </button>
      <TaskBtn icon={<Svg s={32} vb="0 0 32 32"><rect width="32" height="29" rx="5" fill="#2196f3" /><path d="M6 30h20" stroke="#a8c8e8" strokeWidth="2" /><path d="M17 13c-4-4-12-3-12 3 0 4 6 5 9 3l6-6c3-2 7 0 7 3 0 5-7 5-10 1M9 11c1-7 12-7 13 0" stroke="#fff" strokeWidth="2.400" /></Svg>}>
        <Mix text="360云盘" />
      </TaskBtn>
      <TaskBtn icon={<Svg s={32} vb="0 0 32 32"><path d="M6 2l12 2v26L6 28z" fill="#f0d880" stroke="#c8a850" /><path d="M3 1l8 5v25l-8-3z" fill="#fbeeb0" stroke="#c8a850" /><path d="M18 20h5v9l-5 1z" fill="#e8c868" /></Svg>}>
        <Mix text="C:\Users\Adminis..." />
      </TaskBtn>
      <TaskBtn icon={<Svg s={32} vb="0 0 32 32"><circle cx="15" cy="17" r="14" fill="#e8f4e0" /><circle cx="15" cy="17" r="12.500" fill="#54bc24" /><path d="M9 16h12c0-8-13-8-13 1 0 8 10 9 13 3" stroke="#fff" strokeWidth="3.200" /><path d="M3 31C0 24 18 1 29 3" stroke="#46a81c" strokeWidth="2" /></Svg>}>
        <Mix text="UG视频教程，UG视..." />
      </TaskBtn>
      <TaskBtn active icon={<NxLogo s={32} />}>
        <Mix bold text="NX 10 - 加工 ..." />
      </TaskBtn>
      <div className="ml-auto flex items-center gap-1 self-stretch py-1 pr-0.5">
        <span className="text-[#4a6a70]"><Mix text="CH" /></span>
        <span className="ml-1.5 h-6 border-l border-[#aaa]" />
        <Svg s={16} vb="0 0 16 16"><circle cx="8" cy="8" r="7" fill="#2864d0" /><path d="M6 6c0-3 4-3 4 0 0 1-2 1-2 3M8 11v1.500" stroke="#fff" strokeWidth="1.500" /></Svg>
        <span className="ml-1 flex flex-col items-center gap-1.5"><Svg s={8} vb="0 0 8 8"><path d="M3 2h4v3H3zM1 4v3h4" stroke="#222" /></Svg><Arrow /></span>
        <div className="flex h-full items-center border border-t-[#888] border-r-white border-b-white border-l-[#888] pr-px pl-1.5">
          <div className="flex items-center gap-2 pr-px">
            <Svg s={16} vb="0 0 16 16"><path d="M1 1h14v14H1z" fill="#2c88d8" /><path d="M3 4h5v8H3zM10 12V6M8 8l2-3 3 3" stroke="#fff" strokeWidth="1.500" /></Svg>
            <Svg s={16} vb="0 0 16 16"><circle cx="8" cy="8" r="7.500" fill="#f4d81c" /><path d="M1 5C4 0 12 0 15 6c-4-2-8 4-14-1z" fill="#6cc83c" /><path d="M8 4v8M4 8h8" stroke="#0c5c1c" strokeWidth="2.200" /></Svg>
            <Svg s={16} vb="0 0 16 16"><path d="M1 12h2v2H1zM4 10h2v4H4zM7 8h2v6H7zM10 5h2v9h-2zM13 2h2v12h-2z" fill="#eee" stroke="#777" strokeWidth="0.500" /></Svg>
            <Svg s={16} vb="0 0 16 16"><path d="M1 6h3l4-4v12l-4-4H1z" fill="#eee" stroke="#777" /><path d="M10 5c2 2 2 4 0 6M12 3c3 3 3 7 0 10" stroke="#999" /></Svg>
            <Svg s={16} vb="0 0 16 16"><path d="M2 3h8v11H2z" fill="#eee" stroke="#777" /><path d="M8 6h7v4l-3 2v2" stroke="#888" fill="#fff" /></Svg>
            <time className="text-center font-['DejaVu_Sans_Mono',monospace] text-[10px] leading-[16px] text-black">22:52<br />2016/10/31</time>
          </div>
          <Svg s={16} vb="0 0 16 16"><path d="M0 3h15v10H0z" fill="#2c58c8" stroke="#123" /><path d="M1 9h5v4H1z" fill="#48b838" /></Svg>
        </div>
      </div>
    </div>
  );
}

function Watermark() {
  return (
    <div className="pointer-events-none absolute right-2 bottom-1 flex items-center gap-2 opacity-80">
      <svg width="86" height="98" viewBox="0 0 88 100" fill="none" aria-hidden="true">
        <path d="M44 3l41 24v46L44 97 3 73V27z" fill="#4cb2e2" stroke="#fff" strokeWidth="4" />
        <path d="M44 5l21 12c-18-2-34 5-43 18l-1 27c3 8 10 18 19 31L5 72V28z" fill="#3c7cc4" />
        <path d="M65 17c-18-2-34 5-43 18-10 2-16 8-18 20M12 22c20-3 42 4 56 20 2 14-2 26-10 34M21 63c5 13 11 22 22 32M43 78c20 0 36-10 41-28" stroke="#fff" strokeWidth="1.500" />
        <path d="M44 23l24 14v28L44 79 20 65V37z" fill="#fff" />
        <path d="M44 28l19 11-19 11-19-11z" fill="#4a9cd8" />
        <path d="M24 41l19 11v21L24 62z" fill="#3c7cc4" />
        <path d="M64 41L45 52v21l19-11z" fill="#5cc0ea" />
      </svg>
      <div className="text-[#4cb2e2] [-webkit-text-stroke:4px_white] [paint-order:stroke]">
        <p className="text-[46px] leading-[48px] font-black">3D世界网</p>
        <p className="font-['DejaVu_Sans',sans-serif] text-[20px] leading-[20px] font-bold">www.3DSJW.COM</p>
      </div>
    </div>
  );
}

export default function App() {
  return (
    <div className="relative flex min-h-screen flex-col overflow-hidden bg-[#d9d9d9] font-['Noto_Sans_CJK_SC',sans-serif] leading-4 text-black">
      <TitleBar />
      <MenuBar />
      <MainToolbar />
      <SelectionBar />
      <main className="flex flex-1">
        <div className="relative min-w-0 flex-1 bg-[#222327]">
          <Toolpath />
          <MillDialog />
        </div>
        <SideTools />
        <Navigator />
        <ResourceBar />
      </main>
      <StatusBar />
      <TaskBar />
      <Watermark />
    </div>
  );
}
